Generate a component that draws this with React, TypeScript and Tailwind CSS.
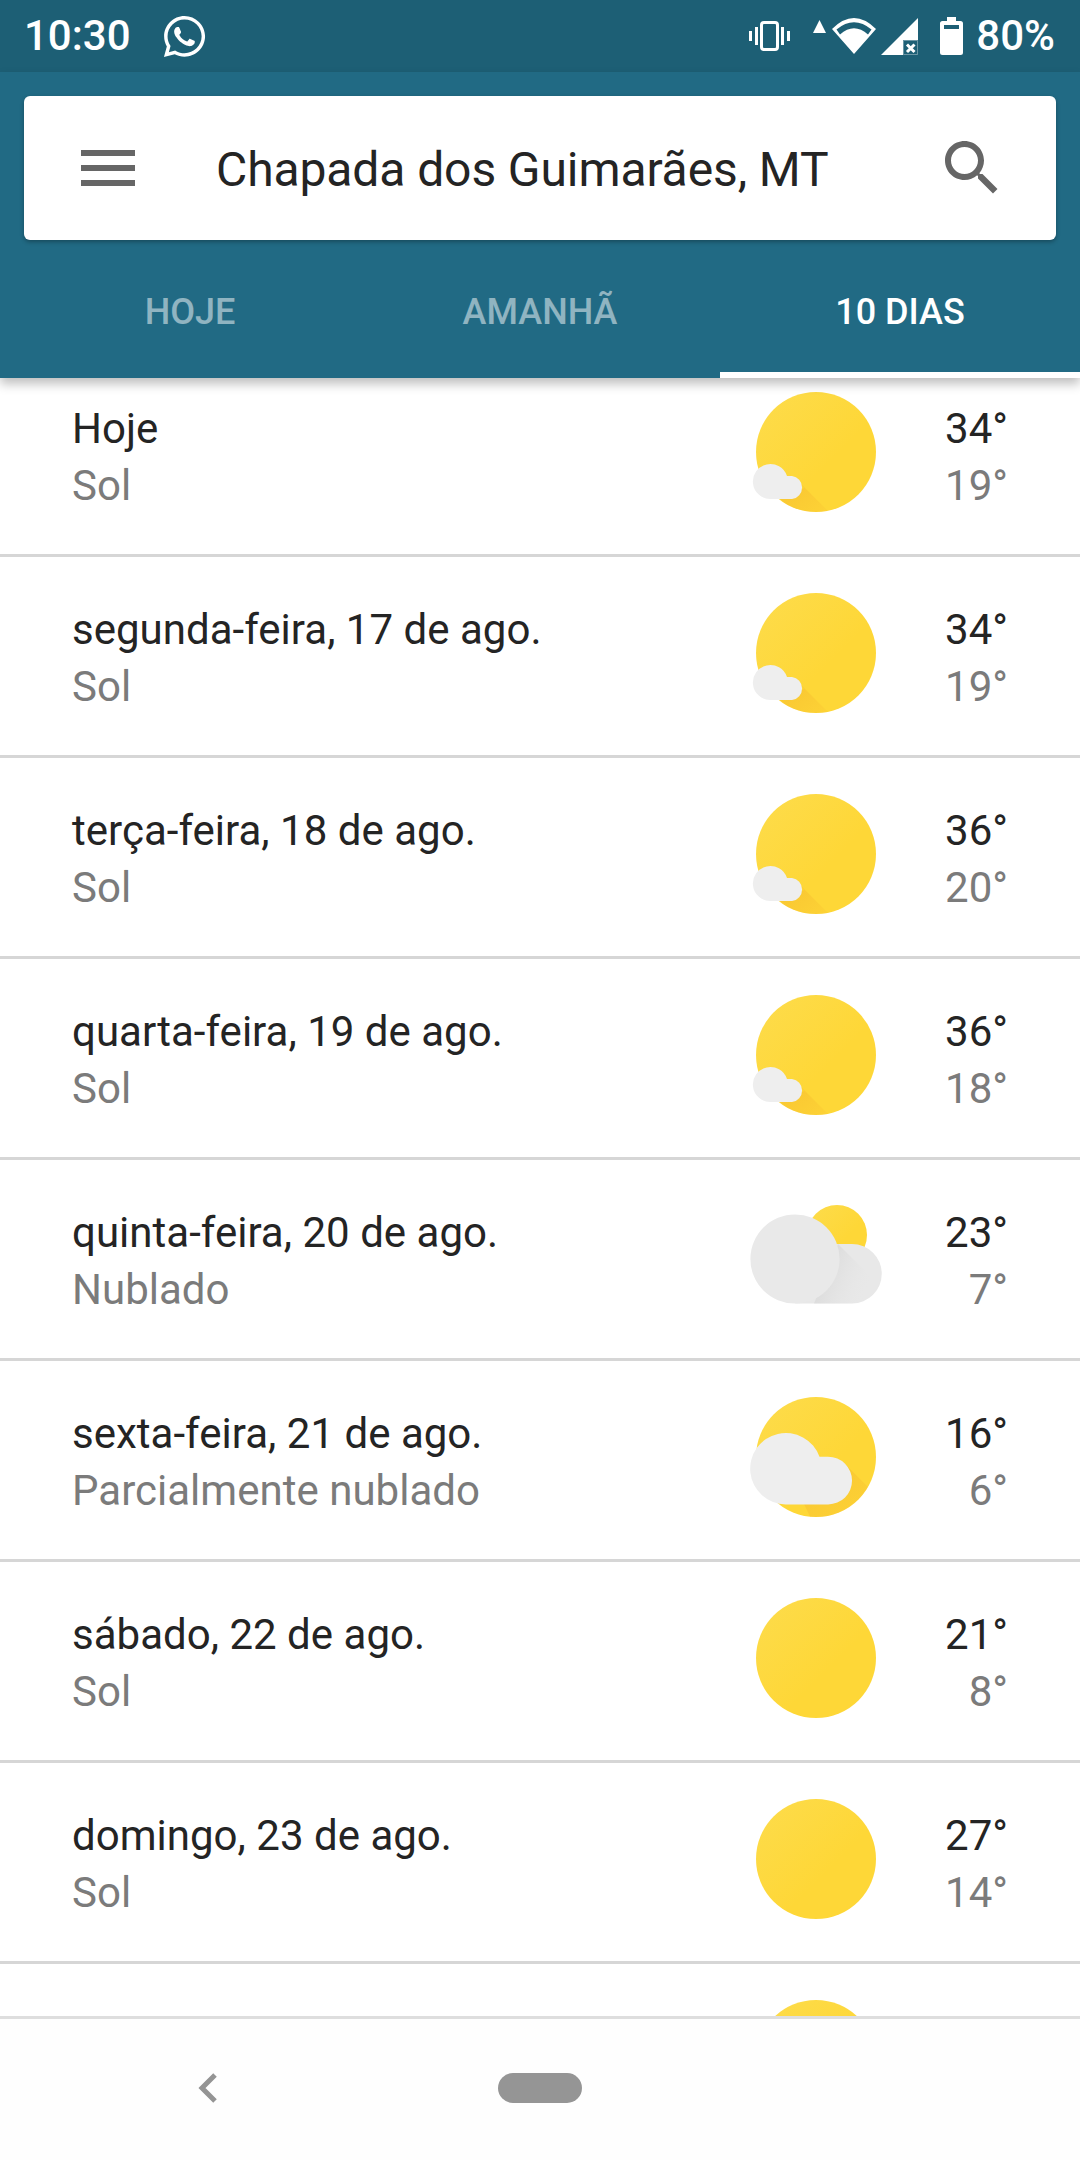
import { FaWhatsapp } from "react-icons/fa";

type Kind = "sun-small" | "cloud" | "sun-cloud" | "sun";

const days: { day: string; text: string; hi: string; lo: string; kind: Kind }[] = [
  { day: "Hoje", text: "Sol", hi: "34°", lo: "19°", kind: "sun-small" },
  { day: "segunda-feira, 17 de ago.", text: "Sol", hi: "34°", lo: "19°", kind: "sun-small" },
  { day: "terça-feira, 18 de ago.", text: "Sol", hi: "36°", lo: "20°", kind: "sun-small" },
  { day: "quarta-feira, 19 de ago.", text: "Sol", hi: "36°", lo: "18°", kind: "sun-small" },
  { day: "quinta-feira, 20 de ago.", text: "Nublado", hi: "23°", lo: "7°", kind: "cloud" },
  { day: "sexta-feira, 21 de ago.", text: "Parcialmente nublado", hi: "16°", lo: "6°", kind: "sun-cloud" },
  { day: "sábado, 22 de ago.", text: "Sol", hi: "21°", lo: "8°", kind: "sun" },
  { day: "domingo, 23 de ago.", text: "Sol", hi: "27°", lo: "14°", kind: "sun" },
  { day: "", text: "", hi: "", lo: "", kind: "sun" },
];

function WeatherIcon({ kind, id }: { kind: Kind; id: number }) {
  const clip = `sun-clip-${id}`;
  const fade = `shadow-fade-${id}`;
  const glow = `sun-glow-${id}`;
  const grey = `grey-fade-${id}`;
  return (
    <svg width="144" height="144" viewBox="0 0 144 144" className="shrink-0">
      <defs>
        <clipPath id={clip}>
          {kind === "cloud" ? <circle cx="93" cy="51" r="30" /> : <circle cx="72" cy="72" r="60" />}
        </clipPath>
        <linearGradient id={fade} x1="0" y1="0" x2="1" y2="1">
          <stop offset="0" stopColor="#f5b82e" stopOpacity="0.6" />
          <stop offset="1" stopColor="#f5b82e" stopOpacity="0.05" />
        </linearGradient>
        <linearGradient id={glow} x1="0" y1="0" x2="1" y2="1">
          <stop offset="0" stopColor="#fddc4c" />
          <stop offset="0.6" stopColor="#fed737" />
          <stop offset="1" stopColor="#fed737" />
        </linearGradient>
        <linearGradient id={grey} x1="0" y1="0" x2="1" y2="0.4">
          <stop offset="0" stopColor="#c8c8c8" stopOpacity="0.8" />
          <stop offset="1" stopColor="#e8e8e8" stopOpacity="0" />
        </linearGradient>
      </defs>
      {kind === "sun-small" && (
        <>
          <circle cx="72" cy="72" r="60" fill={`url(#${glow})`} />
          <polygon points="36,119 60,108 54,101 93,140 60,140" fill={`url(#${fade})`} clipPath={`url(#${clip})`} />
          <path d="M26.500 119A17.500 17.500 0 1 1 43 96L48 96A11.600 11.600 0 0 1 48 119Z" fill="#eeeeee" />
        </>
      )}
      {kind === "sun-cloud" && (
        <>
          <circle cx="72" cy="72" r="60" fill={`url(#${glow})`} />
          <polygon points="60,119 108,95 100,78 142,120 110,140 70,140" fill={`url(#${fade})`} clipPath={`url(#${clip})`} />
          <path d="M41.700 119.400A35.700 35.700 0 1 1 75.500 71.700L84.200 71.700A23.800 23.800 0 0 1 84.200 119.400Z" fill="#eeeeee" />
        </>
      )}
      {kind === "sun" && <circle cx="72" cy="72" r="60" fill={`url(#${glow})`} />}
      {kind === "cloud" && (
        <>
          <circle cx="93" cy="51" r="30" fill={`url(#${glow})`} />
          <path d="M51 119.500L108 119.500A29.750 29.750 0 0 0 108 60L80 60Z" fill="#e8e8e8" />
          <polygon points="94,60 134,100 120,119.500 70,119.500" fill={`url(#${grey})`} />
          <circle cx="51" cy="75" r="44.600" fill="#e9e9e9" />
        </>
      )}
    </svg>
  );
}

function DayRow({ row, id }: { row: (typeof days)[number]; id: number }) {
  return (
    <div className="flex h-[201px] shrink-0 border-b-[3px] border-[#d6d6d6] pl-[72px] pr-[72px]">
      <div className="flex-1 pt-[44px] text-[42px] leading-[57px] tracking-[0.02px]">
        <div className="text-[#242424]">{row.day}</div>
        <div className="text-[#7b7b7b]">{row.text}</div>
      </div>
      <div className="pt-[24px]">
        <WeatherIcon kind={row.kind} id={id} />
      </div>
      <div className="w-[120px] pt-[44px] text-right text-[42px] leading-[57px] tracking-[0.02px]">
        <div className="text-[#242424]">{row.hi}</div>
        <div className="text-[#7b7b7b]">{row.lo}</div>
      </div>
    </div>
  );
}

function StatusBar() {
  return (
    <div className="flex h-[72px] shrink-0 items-center bg-[#1d5f75] pl-[24px] pr-[25px] text-white">
      <span className="text-[42px] font-medium leading-none">10:30</span>
      <FaWhatsapp className="ml-[30px] text-[47px]" />
      <div className="ml-auto flex items-center">
        <svg width="41" height="30" viewBox="0 0 41 30" fill="none" stroke="white">
          <rect x="12.500" y="1.500" width="16" height="27" rx="2.500" strokeWidth="3" />
          <path d="M7.500 6v18M1.500 10v10M33.500 6v18M39.500 10v10" strokeWidth="3" />
        </svg>
        <svg className="mb-[19px] ml-[23px]" width="13" height="13" viewBox="0 0 13 13" fill="white">
          <path d="M6.500 0L13 13H0Z" />
        </svg>
        <svg className="ml-[6px]" width="44" height="36" viewBox="0 0 44 36" fill="white">
          <path
            fillRule="evenodd"
            d="M0 11Q22 -11 44 11L22 36ZM4.500 11.500L8 16.500Q22 4 36 16.500L39.500 11.500Q22 -3 4.500 11.500Z"
          />
        </svg>
        <svg className="ml-[5px]" width="37" height="37" viewBox="0 0 37 37" fill="white">
          <path d="M0 37L37 0V22H22V37Z" />
          <path d="M22.500 22.500H36.500V36.500H22.500Z" fill="none" stroke="white" strokeOpacity="0.35" />
          <path d="M26 26.500L33.500 34M33.500 26.500L26 34" stroke="white" strokeWidth="3" fill="none" />
        </svg>
        <svg className="ml-[22px]" width="23" height="38" viewBox="0 0 23 38" fill="white">
          <path d="M7 0H16V4H20.500Q23 4 23 6.500V35.500Q23 38 20.500 38H2.500Q0 38 0 35.500V6.500Q0 4 2.500 4H7Z" />
          <path d="M4 8H19V12H4Z" fill="#1d5f75" />
        </svg>
        <span className="ml-[13px] text-[42px] font-medium leading-none">80%</span>
      </div>
    </div>
  );
}

function Header() {
  return (
    <div className="relative z-10 h-[306px] shrink-0 bg-[#216a84] shadow-[0_6px_10px_rgba(0,0,0,0.25)]">
      <div className="mx-[24px] mt-[24px] flex h-[144px] items-center rounded-[6px] bg-white shadow-[0_2px_4px_rgba(0,0,0,0.3)]">
        <div className="ml-[57px] flex w-[54px] flex-col gap-[9px]">
          <div className="h-[6px] bg-[#666666]" />
          <div className="h-[6px] bg-[#666666]" />
          <div className="h-[6px] bg-[#666666]" />
        </div>
        <div className="ml-[81px] flex-1 pt-[3px] text-[48px] tracking-[-0.1px] text-[#242424]">Chapada dos Guimarães, MT</div>
        <svg className="mr-[48px]" width="72" height="72" viewBox="0 0 24 24" fill="#666666">
          <path d="M15.500 14h-.79l-.28-.27C15.410 12.590 16 11.110 16 9.500 16 5.910 13.090 3 9.500 3S3 5.910 3 9.500 5.910 16 9.500 16c1.610 0 3.090-.59 4.230-1.570l.27.28v.79l5 4.990L20.490 19l-4.990-5zm-6 0C7.010 14 5 11.990 5 9.500S7.010 5 9.500 5 14 7.010 14 9.500 11.990 14 9.500 14z" />
        </svg>
      </div>
      <div className="grid h-[138px] grid-cols-3 text-[36px] font-medium">
        <div className="flex items-center justify-center pl-[20px] pt-[6px] text-white/50">HOJE</div>
        <div className="flex items-center justify-center pt-[6px] text-white/50">AMANHÃ</div>
        <div className="flex items-center justify-center border-b-[6px] border-white pt-[12px] text-white">10 DIAS</div>
      </div>
    </div>
  );
}

export default function App() {
  return (
    <div className="flex h-[2160px] w-[1080px] flex-col overflow-hidden bg-white font-[family-name:Roboto,sans-serif]">
      <StatusBar />
      <Header />
      <div className="min-h-0 flex-1 overflow-hidden">
        <div className="-mt-[22px]">
          {days.map((row, i) => (
            <DayRow key={i} row={row} id={i} />
          ))}
        </div>
      </div>
      <div className="flex h-[144px] shrink-0 items-center border-t-[3px] border-[#dedede] bg-[#fefefe] pb-[3px] pl-[197px]">
        <svg width="22" height="32" viewBox="0 0 22 32" fill="none" stroke="#949494" strokeWidth="5">
          <path d="M18 3L5 16L18 29" />
        </svg>
        <div className="ml-[279px] h-[30px] w-[84px] rounded-[15px] bg-[#959595]" />
      </div>
    </div>
  );
}
